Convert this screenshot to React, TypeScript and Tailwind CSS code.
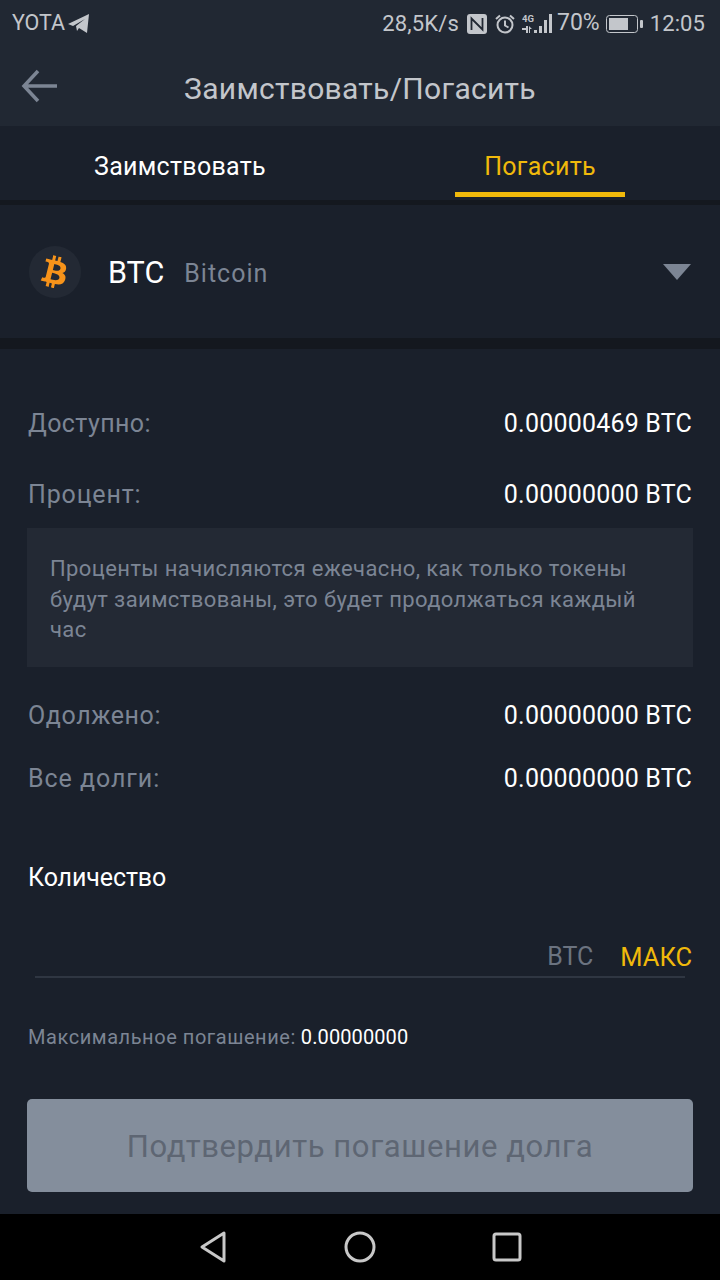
import { FaBtc } from 'react-icons/fa';

const Row = ({ label, value, className, tracking }: { label: string; value: string; className: string; tracking: string }) => (
  <div className={`flex h-[36px] items-center justify-between pt-[2px] leading-[36px] ${className}`}>
    <span className={`text-[25px] text-[#7c8594] ${tracking}`}>{label}</span>
    <span className="text-[25px] tracking-[0.2px] text-white">{value}</span>
  </div>
);

const StatusBar = () => (
  <div className="flex h-[44px] items-center justify-between pl-[12px] pr-[15px] pt-[3px] text-[#c3c6cb]">
    <div className="flex items-center gap-[3px]">
      <span className="text-[21.5px]">YOTA</span>
      <svg width="22" height="19" viewBox="0 0 22 19" fill="#c3c6cb">
        <path d="M0 10 21 0 19 19 11 14 9 17 8 12 17 5 5 12Z" />
      </svg>
    </div>
    <div className="flex items-center">
      <span className="text-[22px] tracking-[0.15px]">28,5K/s</span>
      {/* nfc */}
      <svg className="ml-[8px]" width="20" height="20" viewBox="0 0 20 20">
        <rect x="0" y="0" width="20" height="20" rx="3" fill="#c3c6cb" />
        <path d="M4.5 16V4.5l11 11V4" fill="none" stroke="#212833" strokeWidth="1.8" />
      </svg>
      {/* alarm */}
      <svg className="ml-[8px]" width="20" height="20" viewBox="0 0 20 20" fill="none" stroke="#c3c6cb" strokeWidth="2">
        <circle cx="10" cy="11" r="7.5" />
        <path d="M10 6.5V11.5l3.5 2M1 5l4-3.5M19 5l-4-3.5" />
      </svg>
      {/* signal */}
      <svg className="ml-[7px]" width="32" height="20" viewBox="0 0 32 20" fill="#c3c6cb">
        <text x="0" y="8" fontSize="9.5" fontWeight="700" fontFamily="Roboto, sans-serif">4G</text>
        <path d="M0 14h4v-2h2v7H4v-3H0zM7 12l3 3H8v4H7z" />
        <path d="M12 16h3v3h-3zM17 12h3v7h-3zM22 6h3v13h-3zM27 0h3v19h-3z" />
      </svg>
      <span className="ml-[3px] text-[23px]">70%</span>
      {/* battery */}
      <svg className="ml-[6px]" width="37" height="18" viewBox="0 0 37 18">
        <rect x="0.5" y="0.5" width="31" height="17" rx="3" fill="none" stroke="#c3c6cb" />
        <rect x="3" y="3" width="19" height="12" fill="#c3c6cb" />
        <rect x="34" y="5" width="3" height="8" rx="1" fill="#c3c6cb" />
      </svg>
      <span className="ml-[7px] text-[22px] tracking-[0.1px]">12:05</span>
    </div>
  </div>
);

export default function App() {
  return (
    <div className="flex h-[1280px] w-[720px] flex-col overflow-hidden bg-[#1a202b] font-['Roboto',sans-serif]">
      <div className="bg-[#212833]">
        <StatusBar />
        <div className="relative flex h-[82px] items-center justify-center pt-[6px]">
          <svg className="absolute left-[21px] top-[25px]" width="38" height="34" viewBox="0 0 38 34" fill="none" stroke="#7c8594" strokeWidth="3.5">
            <path d="M36 17H3M17 2 3 17l14 15" />
          </svg>
          <span className="text-[30px] tracking-[0.3px] text-[#c3c6cb]">Заимствовать/Погасить</span>
        </div>
      </div>

      <div className="box-content flex h-[74px] border-b-[5px] border-[#14181f]">
        <div className="flex w-[360px] items-center justify-center pt-[8px] text-[25px] tracking-[0.3px] text-white">Заимствовать</div>
        <div className="relative flex w-[360px] items-center justify-center pt-[8px] text-[25px] tracking-[0.3px] text-[#f0b90b]">
          Погасить
          <div className="absolute bottom-[3px] left-[95px] h-[5px] w-[170px] bg-[#f0b90b]" />
        </div>
      </div>

      <div className="flex h-[133px] items-center pl-[29px] pr-[29px]">
        <div className="flex h-[52px] w-[52px] items-center justify-center rounded-full bg-[#232934]">
          <FaBtc className="rotate-[14deg] text-[32px] text-[#f7931a]" />
        </div>
        <span className="ml-[27px] pt-[2px] text-[30.5px] text-white">BTC</span>
        <span className="ml-[20px] pt-[4px] text-[25px] tracking-[1px] text-[#7c8594]">Bitcoin</span>
        <svg className="ml-auto" width="28" height="16" viewBox="0 0 28 16" fill="#7c8594">
          <path d="M0 0h28L14 16Z" />
        </svg>
      </div>
      <div className="h-[11px] bg-[#14181f]" />

      <div className="px-[28px]">
        <Row className="mt-[56px]" tracking="tracking-[0.4px]" label="Доступно:" value="0.00000469 BTC" />
        <Row className="mt-[35px]" tracking="tracking-[0.85px]" label="Процент:" value="0.00000000 BTC" />
        <div className="-mx-[1px] mt-[16px] h-[139px] bg-[#232934] pl-[23px] pr-[23px] pt-[26px] text-[22px] leading-[30.5px] tracking-[0.4px] text-[#7c8594]">
          Проценты начисляются ежечасно, как только токены будут заимствованы, это будет продолжаться каждый час
        </div>
        <Row className="mt-[30px]" tracking="tracking-[0.6px]" label="Одолжено:" value="0.00000000 BTC" />
        <Row className="mt-[27px]" tracking="tracking-[0.95px]" label="Все долги:" value="0.00000000 BTC" />

        <div className="mt-[63px] h-[36px] pt-[1px] text-[25px] leading-[36px] tracking-[-0.1px] text-white">Количество</div>
        <div className="mx-[7px] mt-[38px] flex h-[45px] items-center justify-end border-b-2 border-[#2f3642] pt-[5px]">
          <span className="text-[25px] text-[#6b7380]">BTC</span>
          <span className="ml-[27px] mr-[-7px] text-[25.5px] text-[#f0b90b]">МАКС</span>
        </div>
        <div className="mt-[45px] flex h-[28px] items-center text-[20px] leading-[28px]">
          <span className="tracking-[0.55px] text-[#7c8594]">Максимальное погашение:</span>
          <span className="ml-[5px] tracking-[0.1px] text-white">0.00000000</span>
        </div>
        <div className="-mx-[1px] mt-[48px] flex h-[93px] items-center justify-center rounded-[5px] bg-[#848e9c] pt-[4px] text-[31px] tracking-[0.6px] text-[#5e6673]">
          Подтвердить погашение долга
        </div>
      </div>

      <div className="mt-auto flex h-[66px] items-center justify-center bg-black text-[#c8c8c8]">
        <svg width="28" height="32" viewBox="0 0 28 32" fill="none" stroke="currentColor" strokeWidth="3" strokeLinejoin="round" className="mr-[117px]">
          <path d="M25 2v28L3 16Z" />
        </svg>
        <svg width="32" height="32" viewBox="0 0 32 32" fill="none" stroke="currentColor" strokeWidth="3">
          <circle cx="16" cy="16" r="14" />
        </svg>
        <svg width="30" height="30" viewBox="0 0 30 30" fill="none" stroke="currentColor" strokeWidth="3" className="ml-[116px]">
          <rect x="2" y="2" width="26" height="26" rx="2" />
        </svg>
      </div>
    </div>
  );
}
